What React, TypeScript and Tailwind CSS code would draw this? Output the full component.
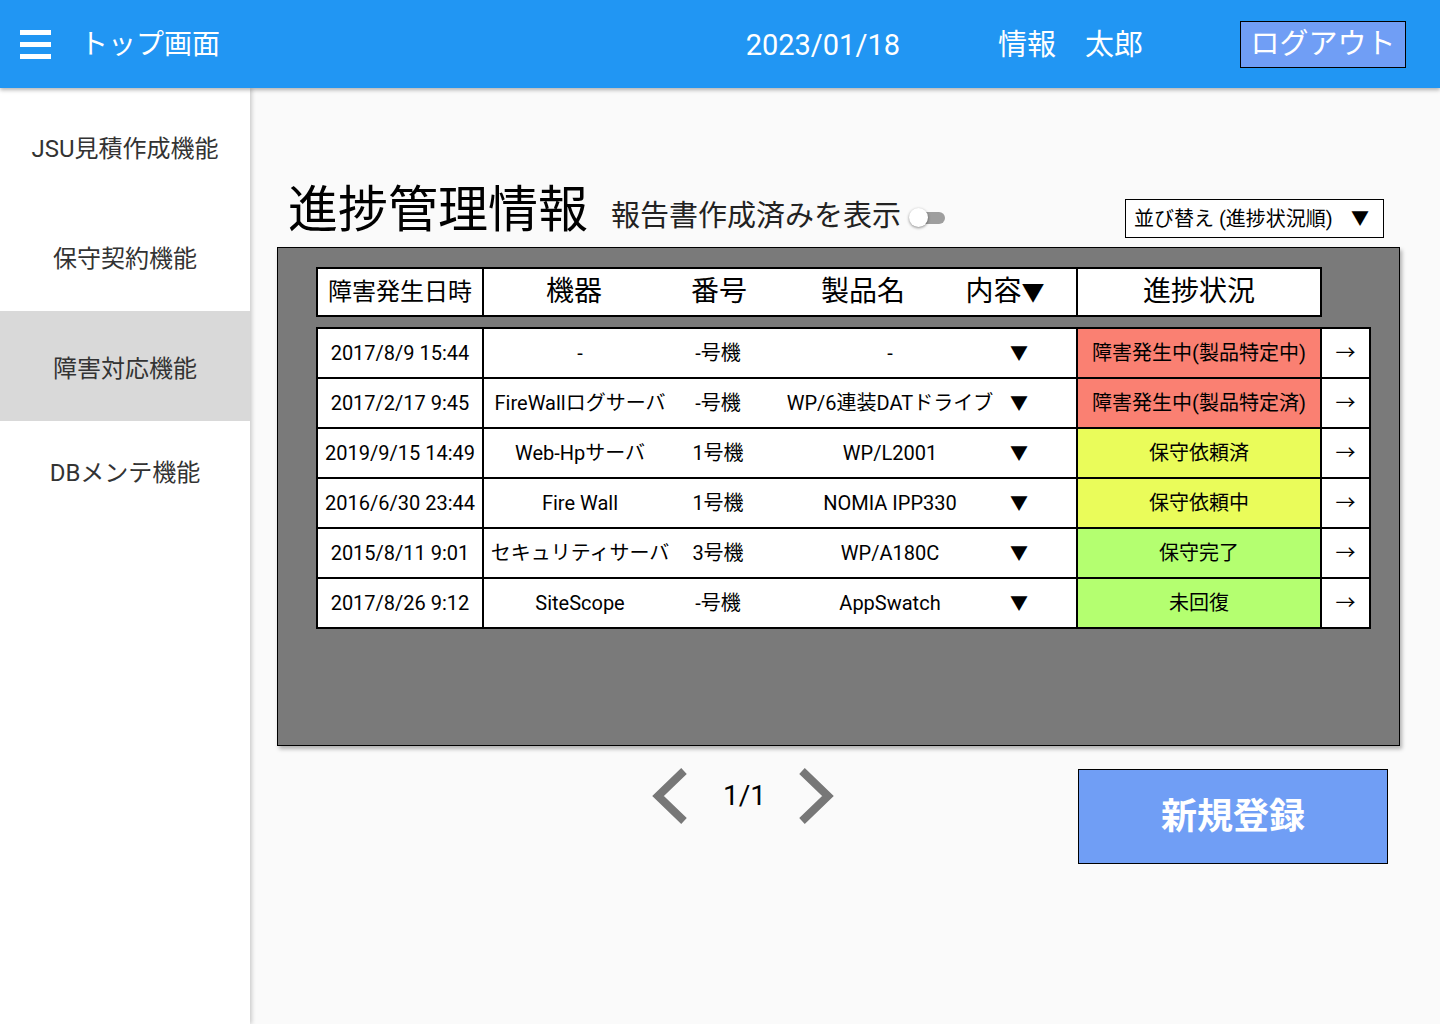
import React from "react";

type Row = {
  date: string;
  device: string;
  no: string;
  product: string;
  status: string;
  color: string;
};

const rows: Row[] = [
  { date: "2017/8/9 15:44", device: "-", no: "-号機", product: "-", status: "障害発生中(製品特定中)", color: "bg-[#fa8072]" },
  { date: "2017/2/17 9:45", device: "FireWallログサーバ", no: "-号機", product: "WP/6連装DATドライブ", status: "障害発生中(製品特定済)", color: "bg-[#fa8072]" },
  { date: "2019/9/15 14:49", device: "Web-Hpサーバ", no: "1号機", product: "WP/L2001", status: "保守依頼済", color: "bg-[#eafc5a]" },
  { date: "2016/6/30 23:44", device: "Fire Wall", no: "1号機", product: "NOMIA IPP330", status: "保守依頼中", color: "bg-[#eafc5a]" },
  { date: "2015/8/11 9:01", device: "セキュリティサーバ", no: "3号機", product: "WP/A180C", status: "保守完了", color: "bg-[#b4ff70]" },
  { date: "2017/8/26 9:12", device: "SiteScope", no: "-号機", product: "AppSwatch", status: "未回復", color: "bg-[#b4ff70]" },
];

const menu = [
  { label: "JSU見積作成機能", h: "h-[110px]", active: false },
  { label: "保守契約機能", h: "h-[110px]", active: false },
  { label: "障害対応機能", h: "h-[110px]", active: true },
  { label: "DBメンテ機能", h: "h-[98px]", active: false },
];

function Chevron({ dir }: { dir: "left" | "right" }) {
  const points = dir === "left" ? "32,3 6,28 32,53" : "4,3 30,28 4,53";
  return (
    <svg width="36" height="56" viewBox="0 0 36 56">
      <polyline points={points} fill="none" stroke="#777777" strokeWidth="8" strokeLinejoin="miter" strokeLinecap="butt" />
    </svg>
  );
}

export default function App() {
  return (
    <div className="flex h-[1024px] w-[1440px] flex-col overflow-hidden bg-[#fafafa] font-['Roboto','Noto_Sans_CJK_JP',sans-serif] text-black">
      {/* header */}
      <header className="relative z-20 flex h-[88px] shrink-0 items-center bg-[#2196f3] text-white shadow-[0_2px_4px_rgba(0,0,0,0.3)]">
        <div className="ml-[20px] flex flex-col gap-[7px]">
          <span className="h-[5px] w-[31px] bg-white" />
          <span className="h-[5px] w-[31px] bg-white" />
          <span className="h-[5px] w-[31px] bg-white" />
        </div>
        <div className="ml-[29px] pt-[2px] text-[28px] leading-none">トップ画面</div>
        <div className="ml-auto pt-[2px] text-[29px] leading-none">2023/01/18</div>
        <div className="ml-[98px] pt-[2px] text-[29px] leading-none">情報　太郎</div>
        <button
          type="button"
          className="ml-[97px] mr-[34px] flex h-[47px] w-[166px] items-center justify-center border border-black bg-[#709ef5] text-[29px] leading-none text-white"
        >
          ログアウト
        </button>
      </header>

      <div className="flex flex-1">
        {/* sidebar */}
        <aside className="relative z-10 w-[250px] shrink-0 bg-white pt-[3px] shadow-[2px_0_4px_rgba(0,0,0,0.18)]">
          {menu.map((m) => (
            <div
              key={m.label}
              className={`flex ${m.h} items-center justify-center pt-[5px] text-[24px] text-[#333] ${m.active ? "bg-[#d9d9d9]" : ""}`}
            >
              {m.label}
            </div>
          ))}
        </aside>

        {/* main */}
        <main className="flex-1 pl-[27px] pr-[40px] pt-[92px]">
          <div className="flex h-[67px] items-start">
            <h1 className="ml-[11px] mt-[5px] text-[50px] font-normal leading-[50px]">進捗管理情報</h1>
            <span className="ml-[23px] mt-[22px] text-[29px] leading-[29px] text-[#222]">報告書作成済みを表示</span>
            <div className="relative ml-[8px] mt-[28px] h-[19px] w-[36px]">
              <div className="absolute left-[6px] top-[4px] h-[12px] w-[30px] rounded-full bg-[#9e9e9e]" />
              <div className="absolute left-0 top-0 h-[19px] w-[19px] rounded-full bg-white shadow-[0_1px_3px_rgba(0,0,0,0.45)]" />
            </div>
            <div className="ml-auto mr-[16px] mt-[19px] flex h-[39px] w-[259px] items-center border border-black bg-white pl-[8px] pr-[14px] text-[20px] leading-none">
              <span>並び替え (進捗状況順)</span>
              <span className="ml-auto text-[18px]">▼</span>
            </div>
          </div>

          {/* panel */}
          <div className="h-[499px] border border-black bg-[#7a7a7a] pl-[38px] pt-[19px] shadow-[2px_3px_4px_rgba(0,0,0,0.3)]">
            <div className="flex h-[50px] w-[1006px] border-2 border-black bg-white">
              <div className="flex w-[166px] items-center justify-center border-r-2 border-black text-[24px]">障害発生日時</div>
              <div className="flex w-[594px] items-center border-r-2 border-black text-[28px]">
                <div className="w-[180px] text-center">機器</div>
                <div className="w-[110px] text-center">番号</div>
                <div className="w-[178px] text-center">製品名</div>
                <div className="w-[106px] text-center">
                  内容<span className="text-[23px]">▼</span>
                </div>
              </div>
              <div className="flex flex-1 items-center justify-center text-[28px]">進捗状況</div>
            </div>

            <div className="mt-[10px] w-[1055px] border-2 border-black bg-white text-[20px]">
              {rows.map((r, i) => (
                <div key={r.date} className={`flex ${i > 0 ? "h-[50px] border-t-2 border-black" : "h-[48px]"}`}>
                  <div className="flex w-[166px] items-center justify-center border-r-2 border-black">{r.date}</div>
                  <div className="flex w-[594px] items-center border-r-2 border-black">
                    <div className="w-[192px] whitespace-nowrap text-center">{r.device}</div>
                    <div className="w-[96px] pr-[12px] text-center">{r.no}</div>
                    <div className="w-[236px] whitespace-nowrap text-center">{r.product}</div>
                    <div className="w-[22px] text-center text-[18px]">▼</div>
                  </div>
                  <div className={`flex w-[244px] items-center justify-center border-r-2 border-black ${r.color}`}>{r.status}</div>
                  <div className="flex flex-1 items-center justify-center">→</div>
                </div>
              ))}
            </div>
          </div>

          {/* pager + button */}
          <div className="mt-[22px] flex items-start">
            <div className="ml-[375px] flex h-[56px] items-center">
              <Chevron dir="left" />
              <span className="ml-[35px] text-[28px] leading-none">1/1</span>
              <span className="ml-[32px]">
                <Chevron dir="right" />
              </span>
            </div>
            <button
              type="button"
              className="ml-auto mr-[12px] mt-[1px] flex h-[95px] w-[310px] items-center justify-center border border-black bg-[#709ef5] text-[36px] font-bold text-white"
            >
              新規登録
            </button>
          </div>
        </main>
      </div>
    </div>
  );
}
